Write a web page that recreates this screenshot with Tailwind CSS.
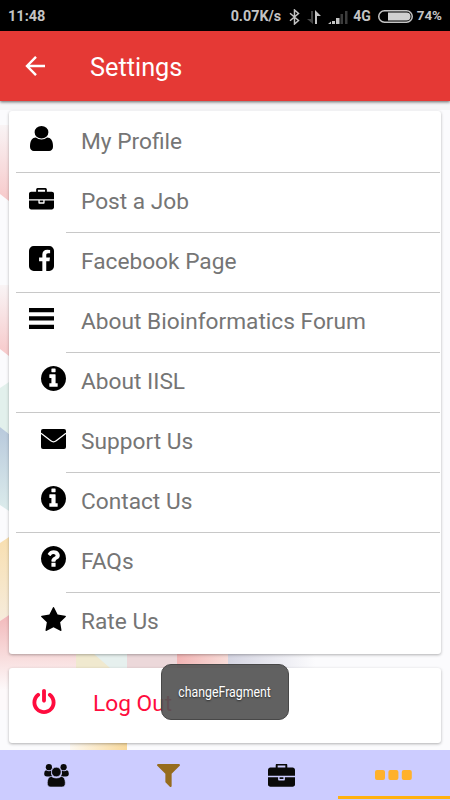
<!DOCTYPE html>
<html lang="en">
<head>
  <meta charset="UTF-8">
  <meta name="viewport" content="width=device-width, initial-scale=1">
  <title>Settings</title>
  <script src="https://cdn.jsdelivr.net/npm/@tailwindcss/browser@4"></script>
</head>
<body class="bg-[#fbfbfd] font-[Roboto,sans-serif]">
  <div class="relative w-[450px] h-[800px] overflow-hidden flex flex-col">

    <!-- Status bar -->
    <header class="h-[31px] shrink-0 bg-black text-[#c4c4c4] flex items-center justify-between pl-2 pr-2 pt-0.5 text-[14px] font-bold">
      <span class="text-[14.5px]">11:48</span>
      <div class="flex items-center">
        <span class="text-[14.300px]">0.07K/s</span>
        <svg class="ml-2 w-[11px] h-4" viewBox="0 0 11 16" fill="none" stroke="#c4c4c4" stroke-width="1.5"><path d="M1 4.3L9.5 11.5L5.5 15V1L9.5 4.5L1 11.7"/></svg>
        <svg class="ml-[7px] w-[15px] h-[14px]" viewBox="0 0 15 14"><path d="M4 1h2v13L0 9h4z" fill="#444"/><path d="M8 0l6 6h-4v8H8z" fill="#c4c4c4"/></svg>
        <svg class="ml-1.5 w-5 h-[14px]" viewBox="0 0 20 14"><path d="M0 14l3-2.500V14zM4 11h3v3H4zM8 8h3.500v6H8z" fill="#c4c4c4"/><path d="M12.500 4H15v10h-2.500zM17 1h2.500v13H17z" fill="#3c3c3c"/></svg>
        <span class="ml-[5px] text-[14px]">4G</span>
        <svg class="ml-[7px] w-[35px] h-[13px]" viewBox="0 0 35 13"><rect x=".75" y=".75" width="33.500" height="11.500" rx="5.750" fill="none" stroke="#c4c4c4" stroke-width="1.500"/><path d="M10 2.500h18.500a4 4 0 0 1 0 8H10z" fill="#d0d0d0"/></svg>
        <span class="ml-1 text-[13.400px]">74%</span>
      </div>
    </header>

    <!-- App bar -->
    <div class="relative z-10 h-[70px] shrink-0 bg-[#e53935] text-white flex items-center pl-[25px] pt-[3px] shadow-[0_1px_3px_rgba(0,0,0,0.6)]">
      <svg class="w-5 h-5 -mt-[3px]" viewBox="0 0 20 20" fill="none" stroke="currentColor" stroke-width="2.400"><path d="M11 .8L2 10L11 19.200M1.500 10H20"/></svg>
      <h1 class="ml-[45px] text-[25.300px] leading-8">Settings</h1>
    </div>

    <main class="relative flex-1 px-[9px] pt-[10px]">
      <!-- Pastel backdrop -->
      <svg class="absolute inset-0 w-[450px] h-[649px]" viewBox="0 101 450 649">
        <defs>
          <linearGradient id="pink" x2="0" y2="1"><stop stop-color="#f9f4f5"/><stop offset="1" stop-color="#f7c9ca"/></linearGradient>
          <linearGradient id="blue" x2="0" y2="1"><stop stop-color="#b8c9dc"/><stop offset="1" stop-color="#dcecec"/></linearGradient>
          <linearGradient id="sand" x2="0" y2="1"><stop stop-color="#f8dfb0"/><stop offset="1" stop-color="#f6ecdc"/></linearGradient>
          <linearGradient id="rose" gradientUnits="userSpaceOnUse" x1="0" y1="615" x2="0" y2="690"><stop stop-color="#f2b9bb"/><stop offset=".55" stop-color="#f8dcdc"/><stop offset="1" stop-color="#fdf9fa"/></linearGradient>
          <linearGradient id="lilac"><stop stop-color="#d5d5e2"/><stop offset="1" stop-color="#fbfbfd"/></linearGradient>
          <linearGradient id="amber"><stop stop-color="#fdf8f0"/><stop offset="1" stop-color="#f8d99c"/></linearGradient>
          <linearGradient id="coral"><stop stop-color="#f2b4b4"/><stop offset="1" stop-color="#f8dcd8"/></linearGradient>
        </defs>
        <path d="M0 101h450v9H0z" fill="#f5f5f6"/>
        <path d="M0 125h9v76l-9-7z" fill="url(#pink)"/>
        <path d="M0 285h9v71l-9-7z" fill="url(#pink)"/>
        <path d="M0 388l9-6v52l-9-7z" fill="#e2f0ec"/>
        <path d="M0 427l9 7v77l-9-6z" fill="url(#blue)"/>
        <path d="M0 543l9-6v78l-9 6z" fill="url(#sand)"/>
        <path d="M0 621l9-6 67 35v60H0z" fill="url(#rose)"/>
        <path d="M76 650h51v20H76z" fill="#e6f0ee"/>
        <path d="M76 654h18l16 14H76z" fill="#f0e9cf"/>
        <path d="M127 650h50v20h-50z" fill="#ecd8da"/>
        <path d="M177 650h51v20h-51z" fill="url(#coral)"/>
        <path d="M228 650h87v20h-87z" fill="url(#lilac)"/>
        <path d="M70 740h57v10H70z" fill="url(#amber)"/>
      </svg>

      <!-- Menu card -->
      <ul class="relative h-[543px] bg-white rounded-[3px] shadow-[0_1px_3px_rgba(0,0,0,0.3)] text-[22.700px] text-[#757575] pr-px pt-[2px]">
        <li class="relative h-[60px] flex items-center pl-[21px]">
          <svg class="w-[23px] h-[25px] -mt-[9px]" viewBox="256 128 1280 1536" preserveAspectRatio="none" fill="#000"><path d="M1536 1399q0 109-62.500 187t-150.500 78h-854q-88 0-150.500-78t-62.500-187q0-85 8.500-160.500t31.500-152 58.500-131 94-89 134.500-34.500q131 128 313 128t313-128q76 0 134.500 34.500t94 89 58.500 131 31.500 152 8.500 160.500zm-256-887q0 159-112.500 271.500t-271.500 112.500-271.500-112.500-112.500-271.500 112.500-271.500 271.500-112.500 271.500 112.500 112.500 271.500z"/></svg>
          <span class="ml-[28px] -mt-px">My Profile</span>
          <i class="absolute bottom-0 left-[7px] right-0 h-px bg-[#c8c8c8]"></i>
        </li>
        <li class="relative h-[60px] flex items-center pl-[20px]">
          <svg class="w-[25px] h-[22px] -mt-[9px]" viewBox="0 32 1792 1504" fill="#000"><path d="M640 256h512v-128h-512v128zm1152 640v480q0 66-47 113t-113 47h-1472q-66 0-113-47t-47-113v-480h672v160q0 26 19 45t45 19h320q26 0 45-19t19-45v-160h672zm-768 0v128h-256v-128h256zm768-480v384h-1792v-384q0-66 47-113t113-47h352v-160q0-40 28-68t68-28h576q40 0 68 28t28 68v160h352q66 0 113 47t47 113z"/></svg>
          <span class="ml-[27px] -mt-px">Post a Job</span>
          <i class="absolute bottom-0 left-[57px] right-0 h-px bg-[#c8c8c8]"></i>
        </li>
        <li class="relative h-[60px] flex items-center pl-[20px]">
          <svg class="w-[25px] h-[25px] -mt-[9px]" viewBox="128 128 1536 1536" fill="#000"><path d="M1376 128q119 0 203.500 84.500t84.500 203.500v960q0 119-84.500 203.500t-203.500 84.500h-188v-595h199l30-232h-229v-148q0-56 23.500-84t91.500-28l122-1v-207q-63-9-178-9-136 0-217.500 80t-81.500 226v171h-200v232h200v595h-532q-119 0-203.500-84.500t-84.500-203.500v-960q0-119 84.500-203.500t203.500-84.500h960z"/></svg>
          <span class="ml-[27px] -mt-px">Facebook Page</span>
          <i class="absolute bottom-0 left-[7px] right-0 h-px bg-[#c8c8c8]"></i>
        </li>
        <li class="relative h-[60px] flex items-center pl-[20px]">
          <svg class="w-[25px] h-[21px] -mt-[9px]" viewBox="0 0 25 21" fill="#000"><path d="M0 0h25v4.300H0zM0 8.300h25v4.300H0zM0 16.700h25V21H0z"/></svg>
          <span class="ml-[27px] -mt-px">About Bioinformatics Forum</span>
          <i class="absolute bottom-0 left-[57px] right-0 h-px bg-[#c8c8c8]"></i>
        </li>
        <li class="relative h-[60px] flex items-center pl-[32px]">
          <svg class="w-[25px] h-[25px] -mt-[9px]" viewBox="128 128 1536 1536" fill="#000"><path d="M1152 1376v-160q0-14-9-23t-23-9h-96v-512q0-14-9-23t-23-9h-320q-14 0-23 9t-9 23v160q0 14 9 23t23 9h96v320h-96q-14 0-23 9t-9 23v160q0 14 9 23t23 9h448q14 0 23-9t9-23zm-128-896v-160q0-14-9-23t-23-9h-192q-14 0-23 9t-9 23v160q0 14 9 23t23 9h192q14 0 23-9t9-23zm640 416q0 209-103 385.500t-279.500 279.500-385.500 103-385.500-103-279.500-279.500-103-385.500 103-385.500 279.500-279.500 385.500-103 385.500 103 279.500 279.500 103 385.500z"/></svg>
          <span class="ml-[15px] -mt-px">About IISL</span>
          <i class="absolute bottom-0 left-[7px] right-0 h-px bg-[#c8c8c8]"></i>
        </li>
        <li class="relative h-[60px] flex items-center pl-[32px]">
          <svg class="w-[25px] h-5 -mt-[8px]" viewBox="0 0 25 20"><rect width="25" height="20" rx="2" fill="#000"/><path d="M0 4.300l9.800 7.500q2.700 2 5.400 0L25 4.300" fill="none" stroke="#fff" stroke-width="1.300"/></svg>
          <span class="ml-[15px] -mt-px">Support Us</span>
          <i class="absolute bottom-0 left-[57px] right-0 h-px bg-[#c8c8c8]"></i>
        </li>
        <li class="relative h-[60px] flex items-center pl-[32px]">
          <svg class="w-[25px] h-[25px] -mt-[9px]" viewBox="128 128 1536 1536" fill="#000"><path d="M1152 1376v-160q0-14-9-23t-23-9h-96v-512q0-14-9-23t-23-9h-320q-14 0-23 9t-9 23v160q0 14 9 23t23 9h96v320h-96q-14 0-23 9t-9 23v160q0 14 9 23t23 9h448q14 0 23-9t9-23zm-128-896v-160q0-14-9-23t-23-9h-192q-14 0-23 9t-9 23v160q0 14 9 23t23 9h192q14 0 23-9t9-23zm640 416q0 209-103 385.500t-279.500 279.500-385.500 103-385.500-103-279.500-279.500-103-385.500 103-385.500 279.500-279.500 385.500-103 385.500 103 279.500 279.500 103 385.500z"/></svg>
          <span class="ml-[15px] -mt-px">Contact Us</span>
          <i class="absolute bottom-0 left-[7px] right-0 h-px bg-[#c8c8c8]"></i>
        </li>
        <li class="relative h-[60px] flex items-center pl-[32px]">
          <svg class="w-[25px] h-[25px] -mt-[9px]" viewBox="128 128 1536 1536" fill="#000"><path d="M1024 1376v-192q0-14-9-23t-23-9h-192q-14 0-23 9t-9 23v192q0 14 9 23t23 9h192q14 0 23-9t9-23zm256-672q0-88-55.500-163t-138.500-116-170-41q-243 0-371 213-15 24 8 42l132 100q7 6 19 6 16 0 25-12 53-68 86-92 34-24 86-24 48 0 85.500 26t37.500 59q0 38-20 61t-68 45q-63 28-115.500 86.500t-52.500 125.500v36q0 14 9 23t23 9h192q14 0 23-9t9-23q0-19 21.500-49.500t54.500-49.500q32-18 49-28.500t46-35 44.500-48 28-60.500 12.500-81zm384 192q0 209-103 385.500t-279.500 279.500-385.500 103-385.500-103-279.500-279.500-103-385.500 103-385.500 279.500-279.500 385.500-103 385.500 103 279.500 279.500 103 385.500z"/></svg>
          <span class="ml-[15px] -mt-px">FAQs</span>
          <i class="absolute bottom-0 left-[57px] right-0 h-px bg-[#c8c8c8]"></i>
        </li>
        <li class="relative h-[60px] flex items-center pl-[32px]">
          <svg class="w-[25px] h-6 -mt-[9px]" viewBox="64 32 1664 1587" fill="#000"><path d="M1728 647q0 22-26 48l-363 354 86 500q1 7 1 20 0 21-10.500 35.500t-30.500 14.500q-19 0-40-12l-449-236-449 236q-22 12-40 12-21 0-31.500-14.500t-10.500-35.500q0-6 2-20l86-500-364-354q-25-27-25-48 0-37 56-46l502-73 225-455q19-41 49-41t49 41l225 455 502 73q56 9 56 46z"/></svg>
          <span class="ml-[15px] -mt-px">Rate Us</span>
        </li>
      </ul>

      <!-- Log out card -->
      <div class="relative mt-[14px] h-[75px] bg-white rounded-[3px] shadow-[0_1px_3px_rgba(0,0,0,0.3)] flex items-center pl-[23px] text-[22.700px] text-[#ff0c3e]">
        <svg class="w-6 h-[25px] -mt-[8px]" viewBox="128 0 1536 1664" fill="currentColor"><path d="M1664 896q0 156-61 298t-164 245-245 164-298 61-298-61-245-164-164-245-61-298q0-182 80.500-343t226.500-270q43-32 95.500-25t83.500 50q32 42 24.500 94.500t-49.500 84.500q-98 74-151.500 181t-53.500 228q0 104 40.500 198.500t109.500 163.500 163.500 109.500 198.500 40.500 198.500-40.500 163.500-109.500 109.500-163.500 40.500-198.500q0-121-53.500-228t-151.500-181q-42-32-49.500-84.500t24.500-94.500q31-43 84-50t95 25q146 109 226.500 270t80.500 343zm-640-768v640q0 52-38 90t-90 38-90-38-38-90v-640q0-52 38-90t90-38 90 38 38 90z"/></svg>
        <span class="ml-[37px] -mt-[2px]">Log Out</span>
      </div>
    </main>

    <!-- Bottom tabs -->
    <nav class="relative h-[50px] shrink-0 bg-[#ccccff] grid grid-cols-4 justify-items-center items-center">
      <svg class="w-[25px] h-[23px]" viewBox="0 0 25 23" fill="#0a0a0a"><circle cx="4.900" cy="3.200" r="3.100"/><circle cx="19.600" cy="3.200" r="3.100"/><path d="M2 6.200q3 1.800 5.200.3-.8 3.500 1 6H3Q0 12.500.2 9.500.3 6.500 2 6.200zM23 6.200q-3 1.800-5.200.3.800 3.500-1 6H22q3 0 2.800-3-.1-3-1.800-3.300z"/><path d="M7.300 12.400q5 3.300 10 0 3.800.5 4 6.300.1 4.300-3.500 4.300H6.800q-3.600 0-3.500-4.300.2-5.800 4-6.300z" stroke="#ccccff" stroke-width=".6"/><circle cx="12.300" cy="8" r="4.800" stroke="#ccccff" stroke-width=".6"/></svg>
      <svg class="w-[23px] h-[23px]" viewBox="192 256 1408 1408" fill="#966c1e"><path d="M1595 295q17 41-14 70l-493 493v742q0 42-39 59-13 5-25 5-27 0-45-19l-256-256q-19-19-19-45v-486l-493-493q-31-29-14-70 17-39 59-39h1280q42 0 59 39z"/></svg>
      <svg class="w-[27px] h-[23px]" viewBox="0 32 1792 1504" fill="#0a0a0a"><path d="M640 256h512v-128h-512v128zm1152 640v480q0 66-47 113t-113 47h-1472q-66 0-113-47t-47-113v-480h672v160q0 26 19 45t45 19h320q26 0 45-19t19-45v-160h672zm-768 0v128h-256v-128h256zm768-480v384h-1792v-384q0-66 47-113t113-47h352v-160q0-40 28-68t68-28h576q40 0 68 28t28 68v160h352q66 0 113 47t47 113z"/></svg>
      <svg class="w-[37px] h-[10px]" viewBox="0 0 37 10" fill="#ffb12b"><rect width="10" height="10" rx="2"/><rect x="13.400" width="10" height="10" rx="2"/><rect x="26.800" width="10" height="10" rx="2"/></svg>
      <i class="absolute bottom-px right-0 w-[112px] h-[3px] bg-[#ffb10f]"></i>
    </nav>

    <!-- Toast -->
    <div class="absolute z-20 left-[161px] top-[664px] w-[128px] h-[56px] rounded-[10px] border border-[#484848] bg-[#555]/93 text-white text-[14px] flex items-center justify-center">
      <span class="inline-block scale-x-[0.88] whitespace-nowrap [text-shadow:0_1px_2px_rgba(0,0,0,0.6)]">changeFragment</span>
    </div>
  </div>
</body>
</html>
